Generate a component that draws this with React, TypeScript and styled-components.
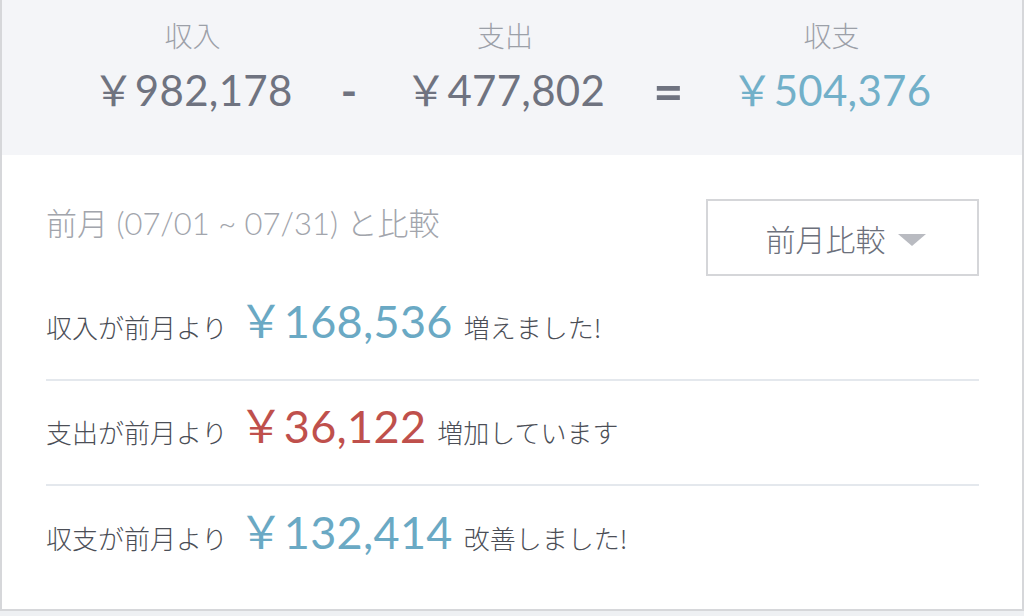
import React from "react";
import styled, { createGlobalStyle } from "styled-components";

const GlobalStyle = createGlobalStyle`
  html, body {
    margin: 0;
    padding: 0;
    background: #eef0f3;
  }
  body {
    font-family: "Lato", "Noto Sans CJK JP", sans-serif;
  }
`;

const Card = styled.div`
  box-sizing: border-box;
  width: 1024px;
  height: 611px;
  background: #ffffff;
  border: 2px solid #d6d7da;
  border-top: none;
  display: flex;
  flex-direction: column;
`;

const Summary = styled.div`
  height: 155px;
  background: #f4f5f8;
  display: flex;
  justify-content: center;
  align-items: flex-end;
  gap: 48px;
  padding-bottom: 42px;
  box-sizing: border-box;
`;

const SummaryCol = styled.div`
  display: flex;
  flex-direction: column;
  align-items: center;
`;

const SummaryLabel = styled.div`
  font-family: "Noto Sans CJK JP", sans-serif;
  font-weight: 300;
  font-size: 28px;
  line-height: 36px;
  color: #9ca0a8;
  margin-bottom: 14px;
`;

const SummaryValue = styled.div<{ $accent?: boolean }>`
  font-family: "Lato", "Noto Sans CJK JP", sans-serif;
  font-size: 42px;
  line-height: 46px;
  color: ${(p) => (p.$accent ? "#72b0c9" : "#6f7380")};
  letter-spacing: 0.3px;
`;

const Operator = styled.div<{ $wide?: boolean }>`
  font-family: "Lato", sans-serif;
  font-size: ${(p) => (p.$wide ? "52px" : "44px")};
  font-weight: 700;
  line-height: 46px;
  color: #6f7380;
`;

const Body = styled.div`
  flex: 1;
  padding: 44px 43px 0 44px;
  display: flex;
  flex-direction: column;
`;

const CompareHead = styled.div`
  display: flex;
  justify-content: space-between;
  align-items: flex-start;
`;

const CompareTitle = styled.div`
  font-family: "Lato", "Noto Sans CJK JP", sans-serif;
  font-weight: 300;
  font-size: 31px;
  line-height: 40px;
  color: #a2a5ac;
  margin-top: 4px;
`;

const SelectButton = styled.div`
  box-sizing: border-box;
  width: 273px;
  height: 77px;
  border: 2px solid #d5d6d9;
  display: flex;
  align-items: center;
  justify-content: center;
  gap: 12px;
  padding-left: 6px;
  font-family: "Noto Sans CJK JP", sans-serif;
  font-weight: 300;
  font-size: 30px;
  color: #6c707b;
`;

const Caret = styled.span`
  width: 0;
  height: 0;
  border-left: 14px solid transparent;
  border-right: 14px solid transparent;
  border-top: 12px solid #b9bbc1;
  margin-top: 4px;
`;

const Row = styled.div<{ $last?: boolean }>`
  box-sizing: border-box;
  height: 105px;
  padding-bottom: 12px;
  display: flex;
  align-items: center;
  border-bottom: ${(p) => (p.$last ? "none" : "2px solid #e4e8ed")};
`;

const RowInner = styled.div`
  display: flex;
  align-items: baseline;
  gap: 11px;
`;

const RowText = styled.span`
  font-family: "Noto Sans CJK JP", sans-serif;
  font-weight: 300;
  font-size: 26px;
  color: #4b4e56;
`;

const Amount = styled.span<{ $tone: "up" | "down" }>`
  font-family: "Lato", "Noto Sans CJK JP", sans-serif;
  font-size: 45px;
  line-height: 46px;
  color: ${(p) => (p.$tone === "up" ? "#6aa9c4" : "#bf504c")};
  letter-spacing: 0.3px;
`;

const rows: { label: string; amount: string; tone: "up" | "down"; suffix: string }[] = [
  { label: "収入が前月より", amount: "￥168,536", tone: "up", suffix: "増えました!" },
  { label: "支出が前月より", amount: "￥36,122", tone: "down", suffix: "増加しています" },
  { label: "収支が前月より", amount: "￥132,414", tone: "up", suffix: "改善しました!" },
];

export default function App() {
  return (
    <>
      <GlobalStyle />
      <Card>
        <Summary>
          <SummaryCol>
            <SummaryLabel>収入</SummaryLabel>
            <SummaryValue>￥982,178</SummaryValue>
          </SummaryCol>
          <Operator>-</Operator>
          <SummaryCol>
            <SummaryLabel>支出</SummaryLabel>
            <SummaryValue>￥477,802</SummaryValue>
          </SummaryCol>
          <Operator $wide>=</Operator>
          <SummaryCol>
            <SummaryLabel>収支</SummaryLabel>
            <SummaryValue $accent>￥504,376</SummaryValue>
          </SummaryCol>
        </Summary>
        <Body>
          <CompareHead>
            <CompareTitle>前月 (07/01 ~ 07/31) と比較</CompareTitle>
            <SelectButton>
              前月比較
              <Caret />
            </SelectButton>
          </CompareHead>
          {rows.map((r, i) => (
            <Row key={r.label} $last={i === rows.length - 1}>
              <RowInner>
                <RowText>{r.label}</RowText>
                <Amount $tone={r.tone}>{r.amount}</Amount>
                <RowText>{r.suffix}</RowText>
              </RowInner>
            </Row>
          ))}
        </Body>
      </Card>
    </>
  );
}
